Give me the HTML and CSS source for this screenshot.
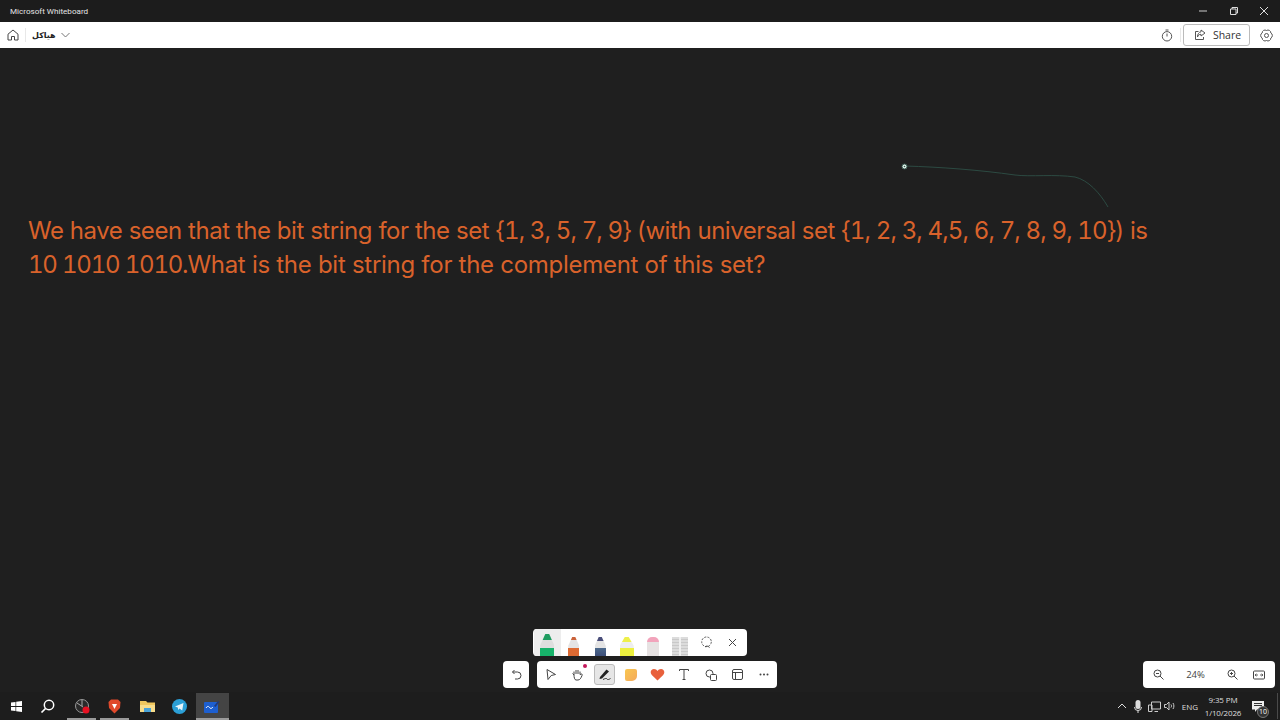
FILE: index.html
```html
<!DOCTYPE html>
<html lang="en">
<head>
    <meta charset="UTF-8">
    <title>Microsoft Whiteboard</title>
    <link rel="stylesheet" href="styles.css">
</head>
<body>

<div class="titlebar">
    <span class="app-name">Microsoft Whiteboard</span>
    <div class="window-controls">
        <svg width="10" height="10" viewBox="0 0 10 10"><path d="M1 5h8" stroke="#ccc" fill="none"/></svg>
        <svg width="10" height="10" viewBox="0 0 10 10"><path d="M1.500 3h5.500v5.500h-5.500zM3 3v-1.500h5.500v5.500h-1.500" stroke="#ddd" fill="none"/></svg>
        <svg width="10" height="10" viewBox="0 0 10 10"><path d="M1 1l8 8M9 1l-8 8" stroke="#ddd" fill="none"/></svg>
    </div>
</div>

<div class="header">
    <div class="header-left">
        <svg class="home" width="12" height="12" viewBox="0 0 12 12"><path d="M1 5.200 6 1l5 4.200V11H7.500V7.500h-3V11H1z" stroke="#444" fill="none"/></svg>
        <span class="divider"></span>
        <span class="board-name" dir="rtl">هياكل</span>
        <svg width="9" height="6" viewBox="0 0 9 6"><path d="M.5 1l4 4 4-4" stroke="#777" fill="none"/></svg>
    </div>
    <div class="header-right">
        <svg width="12" height="13" viewBox="0 0 12 13"><circle cx="6" cy="7.300" r="4.700" stroke="#555" fill="none"/><path d="M4.500 1h3M6 4.500v3" stroke="#555" fill="none"/></svg>
        <span class="divider"></span>
        <div class="share-btn">
            <svg width="12" height="12" viewBox="0 0 12 12"><path d="M4.500 2.500H1.500v8h8V8M7 1l4 3-4 3V5.300C5 5.300 4 6.300 3.500 8 3.500 5 5 3 7 2.800z" stroke="#555" fill="none"/></svg>
            <span>Share</span>
        </div>
        <svg class="gear" width="13" height="13" viewBox="0 0 13 13"><path d="M10.830 4A2.800 2.800 0 0 1 10.830 9A2.800 2.800 0 0 1 6.500 11.500A2.800 2.800 0 0 1 2.170 9A2.800 2.800 0 0 1 2.170 4A2.800 2.800 0 0 1 6.500 1.500A2.800 2.800 0 0 1 10.830 4z" stroke="#555" fill="none"/><circle cx="6.500" cy="6.500" r="2" stroke="#555" fill="none"/></svg>
    </div>
</div>

<div class="canvas">
    <svg class="ink" width="230" height="60" viewBox="0 0 230 60">
        <path d="M15 11C50 12 90 15 125 20C140 22 165 19 185 22C198 25 210 38 218 52" stroke="#2c4a42" fill="none"/>
        <circle cx="14.500" cy="11.500" r="2.500" fill="#dff2ea" stroke="#3a5a50"/>
        <circle cx="14.500" cy="11.500" r=".8" fill="#3a5a50"/>
    </svg>

    <p class="question">We have seen that the bit string for the set <span class="nums">{1, 3, 5, 7, 9}</span> (with universal set <span class="nums">{1, 2, 3, 4,5, 6, 7, 8, 9, 10}</span>) is<br><span class="bits">10 1010 1010.</span><span class="second">What is the bit string for the complement of this set?</span></p>

    <div class="ink-tray">
        <div class="pen pen-active"><span class="pen-tip tip-green"></span><span class="pen-body body-green"></span></div>
        <div class="pen"><span class="pen-tip tip-orange"></span><span class="pen-body body-orange"></span></div>
        <div class="pen"><span class="pen-tip tip-navy"></span><span class="pen-body body-navy"></span></div>
        <div class="pen"><span class="pen-tip tip-yellow"></span><span class="pen-body body-yellow"></span></div>
        <div class="pen"><span class="eraser"></span></div>
        <div class="pen"><span class="ruler"></span></div>
        <div class="pen"><svg width="13" height="13" viewBox="0 0 13 13"><circle cx="6.500" cy="5.800" r="4.800" stroke="#555" stroke-dasharray="2 1.300" fill="none"/><path d="M5 11c1.500-1.500 3-1 4.500.5" stroke="#444" fill="none"/></svg></div>
        <div class="pen"><svg width="9" height="9" viewBox="0 0 9 9"><path d="M1 1l7 7M8 1l-7 7" stroke="#444" fill="none"/></svg></div>
    </div>

    <div class="undo-box">
        <svg width="11" height="11" viewBox="0 0 11 11"><path d="M3.500 1 1.500 3l2 2M1.500 3h5a3.300 3.300 0 0 1 0 7H4" stroke="#444" fill="none"/></svg>
    </div>

    <div class="toolbar">
        <div class="tool"><svg width="12" height="13" viewBox="0 0 12 13"><path d="M2 1.500 10.500 6.500 6.200 7.500 3 11.500z" stroke="#444" fill="none"/></svg></div>
        <div class="tool">
            <svg width="13" height="13" viewBox="0 0 13 13"><path d="M3 7 1.500 5.500M3 7V3.500M5 6V2M7 6V2M9 6.500V3.500M9 6.500l1.500-.5c1 0 .8 1 .3 2C10 10 9 12 7 12H5C3.500 12 3 9 3 7" stroke="#444" fill="none"/></svg>
            <span class="hand-dot"></span>
        </div>
        <div class="tool tool-active"><svg width="14" height="13" viewBox="0 0 14 13"><path d="M2 9 8.500 1.500l2.500 2L4 10.500l-2.500.5z" fill="#222"/><path d="M5 11.500c2-1 3.500-1.500 4-.5s2 .5 3.500-.5" stroke="#333" fill="none"/></svg></div>
        <div class="tool"><span class="sticky"></span></div>
        <div class="tool"><svg width="15" height="13" viewBox="0 0 15 13"><path d="M7.500 12.500 1.800 7C-.5 4.500 1 1 4 1c1.500 0 2.800.8 3.500 2C8.200 1.800 9.500 1 11 1c3 0 4.500 3.500 2.200 6z" fill="#e8603c"/></svg></div>
        <div class="tool"><svg width="10" height="11" viewBox="0 0 10 11"><path d="M.5 2V.5h9V2M5 .5v10M3.500 10.500h3" stroke="#444" fill="none"/></svg></div>
        <div class="tool"><svg width="12" height="12" viewBox="0 0 12 12"><circle cx="4.500" cy="4.500" r="3.500" stroke="#444" fill="none"/><rect x="5.500" y="5.500" width="6" height="6" rx="1" stroke="#444" fill="#fff"/></svg></div>
        <div class="tool"><svg width="11" height="11" viewBox="0 0 11 11"><rect x=".5" y=".5" width="10" height="10" rx="1.500" stroke="#444" fill="none"/><path d="M.5 3.500h10M3.500 3.500v7" stroke="#444" fill="none"/></svg></div>
        <div class="tool"><svg width="10" height="3" viewBox="0 0 10 3"><circle cx="1.500" cy="1.500" r="1" fill="#444"/><circle cx="5" cy="1.500" r="1" fill="#444"/><circle cx="8.500" cy="1.500" r="1" fill="#444"/></svg></div>
    </div>

    <div class="zoom-box">
        <svg width="11" height="11" viewBox="0 0 11 11"><circle cx="4.500" cy="4.500" r="3.500" stroke="#444" fill="none"/><path d="M7 7l3.500 3.500M3 4.500h3" stroke="#444" fill="none"/></svg>
        <span class="zoom-value">24%</span>
        <svg width="11" height="11" viewBox="0 0 11 11"><circle cx="4.500" cy="4.500" r="3.500" stroke="#444" fill="none"/><path d="M7 7l3.500 3.500M3 4.500h3M4.500 3v3" stroke="#444" fill="none"/></svg>
        <svg width="12" height="10" viewBox="0 0 12 10"><rect x=".5" y="1" width="11" height="8" rx="1" stroke="#444" fill="none"/><path d="M2 5h3M7 5h3M3.500 3.800 2 5l1.500 1.200M8.500 3.800 10 5 8.500 6.200" stroke="#444" stroke-width=".8" fill="none"/></svg>
    </div>
</div>

<div class="taskbar">
    <div class="task-left">
        <div class="task-item"><svg width="11" height="11" viewBox="0 0 11 11"><path d="M0 1.600 4.500.9v4.200H0zM5.200.8 11 0v5.100H5.200zM0 5.900h4.500v4.200L0 9.400zM5.200 5.900H11V11l-5.800-.8z" fill="#fff"/></svg></div>
        <div class="task-item task-search"><svg width="15" height="15" viewBox="0 0 15 15"><circle cx="9" cy="6" r="4.700" stroke="#fff" stroke-width="1.500" fill="none"/><path d="M5.500 9.500 1.500 13.500" stroke="#fff" stroke-width="1.700" fill="none"/></svg></div>
        <div class="task-item task-open"><svg width="16" height="16" viewBox="0 0 16 16"><circle cx="8" cy="8" r="6.500" stroke="#999" fill="#2a2a2a"/><path d="M3 5l6 4M8 2v6" stroke="#aaa" fill="none"/><circle cx="12" cy="12" r="3.500" fill="#e81123"/></svg></div>
        <div class="task-item task-open"><svg width="13" height="15" viewBox="0 0 13 15"><path d="M3 .5h7L12.500 3 12 9l-5.500 5.500L1 9 .5 3z" fill="#e0492b"/><path d="M4 5h5L7.500 8l-1 2-1-2z" fill="#fff"/></svg></div>
        <div class="task-item"><svg width="15" height="12" viewBox="0 0 15 12"><path d="M0 1h6l1.500 1.500H15V12H0z" fill="#efc75e"/><path d="M0 5h15v7H0z" fill="#f7dd8c"/><rect x="4" y="8" width="7" height="4" fill="#4aa3d8"/></svg></div>
        <div class="task-item"><svg width="15" height="15" viewBox="0 0 15 15"><circle cx="7.500" cy="7.500" r="7.500" fill="#2b9fd6"/><path d="M3 7.500 11.500 4l-1.300 7.500-2.700-2-1.300 1.500-.4-2.500z" fill="#e8f5fb"/></svg></div>
        <div class="task-item task-current"><svg width="16" height="13" viewBox="0 0 16 13"><rect y="2" width="14" height="11" rx="1" fill="#1d5fd0"/><path d="M2 8c2-3 3-1 4 0s2 0 3-1" stroke="#fff" fill="none"/><path d="M10 6l4-5 1.500 1-4 5z" fill="#223a7a"/></svg></div>
    </div>
    <div class="task-right">
        <div class="tray-slot"><svg width="10" height="6" viewBox="0 0 10 6"><path d="M1 5l4-4 4 4" stroke="#ddd" fill="none"/></svg></div>
        <div class="tray-slot"><svg width="8" height="13" viewBox="0 0 8 13"><rect x="1.500" y="0" width="5" height="9" rx="2.500" fill="#ddd"/><path d="M.5 7a3.500 3.500 0 0 0 7 0M4 10.500V13" stroke="#ddd" fill="none"/></svg></div>
        <div class="tray-slot"><svg width="13" height="11" viewBox="0 0 13 11"><path d="M3.500 1h9v7h-9zM.5 4h3.500v6.500H.5zM6.500 10.500h3.500" stroke="#ccc" fill="none"/></svg></div>
        <div class="tray-slot"><svg width="12" height="10" viewBox="0 0 12 10"><path d="M.5 3.500h2L5 1v8L2.500 6.500h-2zM7 3.500c.7 1 .7 2 0 3M9 2c1.200 2 1.200 4 0 6" stroke="#ccc" fill="none"/></svg></div>
        <span class="lang">ENG</span>
        <div class="clock"><span>9:35 PM</span><span>1/10/2026</span></div>
        <div class="notify">
            <svg width="12" height="11" viewBox="0 0 12 11"><path d="M0 0h12v8.500H5L3 11V8.500H0z" fill="#eee"/><path d="M2 2.500h8M2 4.500h8" stroke="#333"/></svg>
            <span class="notify-count">10</span>
        </div>
        <span class="desktop-line"></span>
    </div>
</div>

</body>
</html>
```

FILE: styles.css
```css
* {
    box-sizing: border-box;
}

html, body {
    margin: 0;
    height: 720px;
    overflow: hidden;
}

body {
    display: flex;
    flex-direction: column;
    width: 1280px;
    background-color: #1f1f1f;
    font-family: 'Open Sans', 'Liberation Sans', sans-serif;
    color: #333;
}

svg {
    display: block;
    flex: none;
}

.titlebar {
    height: 22px;
    display: flex;
    align-items: center;
    justify-content: space-between;
    background-color: #1c1c1c;
    padding-left: 10px;
}

.app-name {
    font-family: 'Roboto', sans-serif;
    font-size: 8.100px;
    color: #e4e4e4;
}

.window-controls {
    display: flex;
    align-items: center;
    gap: 20.500px;
    padding-right: 11px;
}

.header {
    height: 26px;
    display: flex;
    align-items: center;
    justify-content: space-between;
    background-color: #fff;
}

.header-left, .header-right {
    display: flex;
    align-items: center;
}

.home {
    margin-left: 7px;
}

.divider {
    width: 1px;
    height: 14px;
    background-color: #e8e8e8;
}

.header-left .divider {
    margin: 0 6px;
}

.board-name {
    font-family: 'DejaVu Sans', sans-serif;
    font-size: 8px;
    font-weight: bold;
    color: #222;
    margin-right: 5px;
}

.header-right .divider {
    margin: 0 2px 0 7px;
}

.share-btn {
    width: 67px;
    height: 22px;
    display: flex;
    align-items: center;
    justify-content: center;
    gap: 7px;
    padding-left: 2px;
    border: 1px solid #bbb;
    border-radius: 3px;
    font-size: 10.500px;
    color: #333;
}

.gear {
    margin: 0 7px 0 10px;
}

.canvas {
    position: relative;
    height: 644px;
    background-color: #1f1f1f;
}

.ink {
    position: absolute;
    left: 890px;
    top: 107px;
}

.question {
    position: absolute;
    left: 28px;
    top: 166px;
    margin: 0;
    font-family: 'Inter', 'Liberation Sans', sans-serif;
    font-size: 24px;
    letter-spacing: -0.45px;
    line-height: 34px;
    white-space: nowrap;
    color: #d9622b;
}

/* digits on the board are wider than Inter's default figures */
.nums, .bits {
    font-variant-numeric: tabular-nums;
}

.nums {
    letter-spacing: -0.85px;
}

.bits {
    letter-spacing: -1.2px;
}

.second {
    letter-spacing: -0.28px;
}

.ink-tray {
    position: absolute;
    left: 533px;
    top: 581px;
    width: 214px;
    height: 27px;
    display: flex;
    background-color: #fff;
    border-radius: 4px;
    overflow: hidden;
    padding-left: 1px;
}

.pen {
    width: 26.500px;
    height: 27px;
    display: flex;
    flex-direction: column;
    align-items: center;
    justify-content: center;
}

.pen:has(.pen-tip), .pen:has(.eraser), .pen:has(.ruler) {
    justify-content: flex-end;
}

.pen-active {
    background-color: #ededed;
}

.pen-tip {
    width: 11px;
    height: 11px;
    clip-path: polygon(36% 0, 64% 0, 100% 80%, 100% 100%, 0 100%, 0 80%);
}

.pen-body {
    width: 11px;
    height: 8px;
}

.tip-green { width: 14px; height: 14px; background: linear-gradient(#1f9c60 0 40%, #dedede 40%); }
.tip-orange { background: linear-gradient(#c9623a 0 30%, #e4e4e4 30%); }
.tip-navy { background: linear-gradient(#4a4e7a 0 35%, #e4e4e4 35%); }
.tip-yellow { width: 14px; background: linear-gradient(#eef04a 0 45%, #eee 45%); }

.body-green { width: 14px; background-color: #17b26a; }
.body-orange { background-color: #dd6a33; }
.body-navy { background: linear-gradient(#4d6a8c, #3e4f7a); }
.body-yellow { width: 14px; background-color: #edf03f; }

.eraser {
    width: 12px;
    height: 19px;
    border-radius: 5px 5px 0 0;
    background: linear-gradient(#f2a3bb 0 28%, #e6e2e2 28%);
}

.ruler {
    width: 16px;
    height: 19px;
    background:
        linear-gradient(90deg, transparent 0 45%, #f0f0f0 45% 55%, transparent 55%),
        repeating-linear-gradient(#dcdcdc 0 2px, #c9c9c9 2px 3px);
}

.undo-box {
    position: absolute;
    left: 503px;
    top: 613px;
    width: 26px;
    height: 27px;
    display: flex;
    align-items: center;
    justify-content: center;
    background-color: #fff;
    border-radius: 4px;
}

.toolbar {
    position: absolute;
    left: 537px;
    top: 613px;
    width: 240px;
    height: 27px;
    display: flex;
    align-items: center;
    padding-left: 1px;
    background-color: #fff;
    border-radius: 4px;
}

.tool {
    position: relative;
    width: 26.500px;
    height: 24px;
    display: flex;
    align-items: center;
    justify-content: center;
}

.tool-active {
    width: 21px;
    height: 21px;
    margin: 0 3px;
    background-color: #e6e6e6;
    border: 1px solid #bbb;
    border-radius: 3px;
}

.hand-dot {
    position: absolute;
    right: 4px;
    top: 1px;
    width: 4px;
    height: 4px;
    border-radius: 50%;
    background-color: #c2185b;
}

.sticky {
    width: 12px;
    height: 12px;
    border-radius: 2px 2px 5px 2px;
    background: linear-gradient(135deg, #f9c74f, #f4a95c);
}

.zoom-box {
    position: absolute;
    left: 1143px;
    top: 613px;
    width: 132px;
    height: 27px;
    display: flex;
    align-items: center;
    padding: 0 9px 0 10px;
    background-color: #fff;
    border-radius: 4px;
}

.zoom-value {
    width: 63px;
    text-align: center;
    font-size: 9.500px;
    color: #444;
}

.zoom-box svg:last-child {
    margin-left: 15px;
}

.taskbar {
    height: 28px;
    display: flex;
    align-items: center;
    justify-content: space-between;
    background-color: #1d1d1d;
}

.task-left, .task-right {
    display: flex;
    align-items: center;
}

.task-item {
    position: relative;
    width: 32.700px;
    height: 28px;
    display: flex;
    align-items: center;
    justify-content: center;
}

.task-search svg {
    margin-right: 4px;
}

.task-open::after, .task-current::after {
    content: "";
    position: absolute;
    left: 2px;
    right: 2px;
    bottom: 0;
    height: 2px;
    background-color: #9a9a9a;
}

.task-current {
    height: 27px;
    margin-top: 1px;
    background-color: #444;
}

.task-current::after {
    left: 0;
    right: 0;
}

.task-right {
    color: #ddd;
}

.tray-slot {
    width: 16px;
    display: flex;
    justify-content: center;
}

.lang {
    width: 24px;
    text-align: center;
    font-size: 8px;
}

.clock {
    display: flex;
    flex-direction: column;
    align-items: center;
    width: 42px;
    font-size: 8px;
    letter-spacing: -0.15px;
    line-height: 13px;
}

.notify {
    position: relative;
    margin: 0 13px 0 8px;
}

.notify-count {
    position: absolute;
    right: -5px;
    bottom: -6px;
    width: 12px;
    height: 12px;
    border: 1px solid #777;
    border-radius: 50%;
    background-color: #333;
    font-size: 7px;
    line-height: 10px;
    text-align: center;
    color: #fff;
}

.desktop-line {
    width: 1px;
    height: 26px;
    margin-right: 2px;
    background-color: #4a4a4a;
}
```
